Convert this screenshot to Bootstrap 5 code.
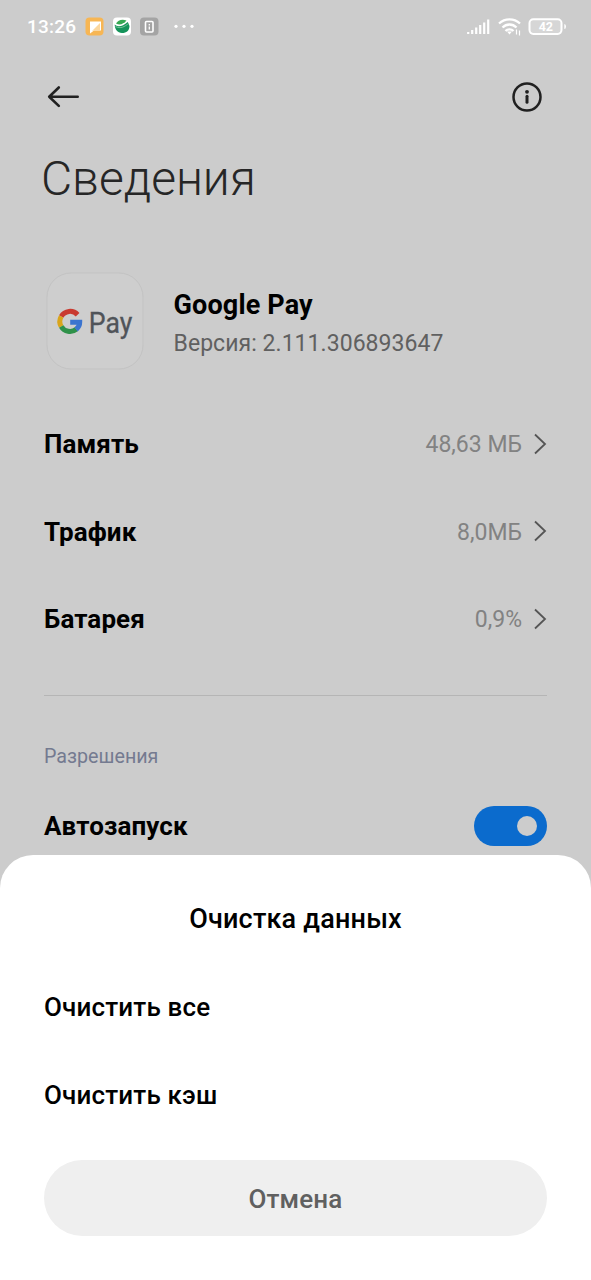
<!DOCTYPE html>
<html lang="ru">
<head>
<meta charset="utf-8">
<meta name="viewport" content="width=device-width, initial-scale=1">
<title>Сведения</title>
<link href="https://cdn.jsdelivr.net/npm/bootstrap@5.3.0/dist/css/bootstrap.min.css" rel="stylesheet">
<style>
  html, body { height: 100%; }
  body { font-family: Roboto, "Liberation Sans", sans-serif; background: #ccc; color: #000; overflow: hidden; }
  svg { display: block; flex: none; }
  .screen { width: 591px; height: 1280px; }
  .status-bar { height: 53px; padding: 0 24px 0 27px; color: #fff; }
  .clock { font-size: 19px; font-weight: 500; letter-spacing: .2px; width: 58px; padding-top: 2px; }
  .app-bar { height: 87px; padding: 0 48px 0 47px; }
  .page-title { height: 80px; padding-left: 41px; font-size: 48px; font-weight: 300; line-height: 78px; color: #262626; letter-spacing: -.05px; }
  .app-info { height: 180px; padding: 52px 44px 0 46px; }
  .app-text { padding-left: 29.5px; }
  .app-name { font-size: 27px; font-weight: 700; line-height: 36px; margin-top: 15px; letter-spacing: .15px; }
  .app-version { font-size: 23px; line-height: 30px; margin-top: 6px; color: #606060; letter-spacing: .05px; }
  .content { width: 503px; }
  .setting { height: 87.5px; font-size: 26px; font-weight: 700; letter-spacing: .1px; }
  .setting span { padding-top: 2px; }
  .setting .setting-value { font-size: 23px; font-weight: 400; color: #828282; letter-spacing: 0; margin-right: 11px; padding-top: 3px; }
  .divider { height: 1px; background: #b5b5b5; margin-top: 32px; }
  .section-label { font-size: 19.7px; line-height: 30px; margin-top: 46px; color: #747a90; }
  .autostart { height: 40px; margin-top: 34px; font-size: 26px; font-weight: 700; letter-spacing: .1px; }
  .autostart-label { padding-top: 2px; }
  .switch { width: 73px; height: 40px; padding-right: 10px; background: #0b6bcd; }
  .knob { width: 20px; height: 20px; background: #ccc; }
  .sheet { height: 425px; padding: 20px 44px 44px; border-radius: 33px 33px 0 0; background: #fff; font-weight: 500; }
  .sheet-title { height: 88px; font-size: 27px; letter-spacing: .2px; }
  .sheet-item { height: 88px; font-size: 26px; letter-spacing: .16px; }
  .cancel { height: 76px; margin-top: 21px; padding-top: 8px; font-size: 26px; font-weight: 500; letter-spacing: .15px; background: #efefef; color: #606060; }
</style>
</head>
<body>
<div class="screen d-flex flex-column">
  <header class="status-bar d-flex align-items-center flex-shrink-0">
    <span class="clock">13:26</span>
    <svg width="112" height="20" viewBox="0 0 112 20">
      <rect x="0.500" y="0.500" width="18" height="18" rx="4" fill="#f7b654"/>
      <path d="M5 4.500h11v9H9l-4 3z" fill="#fff"/><path d="M7 14l8-8v7.500H9z" fill="#fbd79e"/>
      <rect x="28" y="0.500" width="18" height="18" rx="4" fill="#fff"/>
      <path d="M29.700 7.500c3 3 8 2 13-2.500l1.800 4c0 4.500-3 7-7.500 7s-7.300-4-7.300-8.500z" fill="#15935a"/>
      <path d="M31 6.500c4 2 7.500.5 10.500-3-4.500-1.700-8.500-.5-10.500 3z" fill="#36a852"/><path d="M30.500 9.500c5 2.500 9 .5 13.500-3.500" fill="none" stroke="#8bd0a4" stroke-width=".8"/>
      <rect x="55" y="0.500" width="18.500" height="18" rx="4" fill="#a4a4a4"/>
      <rect x="60.500" y="4.500" width="7.500" height="10.500" rx="1" fill="none" stroke="#fff" stroke-width="1.600"/>
      <path d="M64.300 7v1.500M64.300 9.500v3" stroke="#fff" stroke-width="1.300"/>
      <g fill="#fff"><circle cx="91" cy="9.300" r="1.600"/><circle cx="99" cy="9.300" r="1.600"/><circle cx="107" cy="9.300" r="1.600"/></g>
    </svg>
    <svg class="ms-auto" width="101" height="20" viewBox="0 0 101 20">
      <path d="M2.200 17v-2M6.200 17v-4M10.200 17v-6.500M14.200 17v-9M18.200 17v-11.500M22.200 17v-14.500" stroke="#fff" stroke-width="2.200"/>
      <g fill="none" stroke="#fff" stroke-width="2.300"><path d="M33 6.500c6-5.500 15-5.500 21 0"/><path d="M36.500 10.500c4-4 10-4 14 0"/><path d="M39.500 14c2-2.200 6-2.200 8 0"/></g>
      <path d="M41 14.500h5l-2.500 3z" fill="#fff"/>
      <path d="M50.500 17.500v-5M53.500 13.500v5" stroke="#fff" stroke-width="1.200"/>
      <rect x="63.500" y="2.300" width="32" height="14.600" rx="3.800" fill="#d6d6d6" stroke="#fff" stroke-width="2"/>
      <path d="M98.300 7q1.700 0 1.700 2.500t-1.700 2.500z" fill="#fff"/>
      <text x="79.800" y="14.200" text-anchor="middle" font-size="12.500" font-weight="700" fill="#fff">42</text>
    </svg>
  </header>

  <nav class="app-bar d-flex align-items-center justify-content-between flex-shrink-0">
    <svg width="32" height="24" viewBox="0 0 32 24" fill="none" stroke="#202020" stroke-width="2.600" stroke-linecap="round" stroke-linejoin="round"><path d="M30.700 11.700H2.200M11.800 2.500L2.200 11.700l9.600 9.200"/></svg>
    <svg width="32" height="32" viewBox="0 0 32 32"><circle cx="16" cy="16" r="13.500" fill="none" stroke="#202020" stroke-width="2.500"/><circle cx="16" cy="10.800" r="1.900" fill="#202020"/><path d="M16 15.300v6" stroke="#202020" stroke-width="3" stroke-linecap="round"/></svg>
  </nav>

  <h1 class="page-title m-0 flex-shrink-0">Сведения</h1>

  <section class="app-info d-flex flex-shrink-0">
    <svg width="98" height="98" viewBox="0 0 98 98">
      <rect x="1" y="1" width="96" height="96" rx="24" fill="#cecece" stroke="#c3c3c3"/>
      <g fill="none" stroke-width="5">
        <path d="M31.600 42.700A10.200 10.200 0 0 0 15.200 44.500" stroke="#c93a30"/>
        <path d="M15.200 44.400A10.200 10.200 0 0 0 15.200 54.500" stroke="#d9a51c"/>
        <path d="M15.200 54.400A10.200 10.200 0 0 0 30.300 57.300" stroke="#2f9149"/>
        <path d="M30.100 57.500Q33.700 54.500 33.700 50.300H24.200" stroke="#3b74cf"/>
      </g>
      <text x="42.800" y="61" font-size="29" fill="#505459" stroke="#505459" stroke-width=".3" textLength="43.500" lengthAdjust="spacingAndGlyphs">Pay</text>
    </svg>
    <div class="app-text">
      <div class="app-name">Google Pay</div>
      <div class="app-version">Версия: 2.111.306893647</div>
    </div>
  </section>

  <main class="content mx-auto flex-shrink-0">
    <div class="setting d-flex align-items-center"><span>Память</span><span class="setting-value ms-auto">48,63 МБ</span><svg width="14" height="22" viewBox="0 0 14 22" fill="none" stroke="#555" stroke-width="1.800"><path d="M2 1.500l10 9.500L2 20.500"/></svg></div>
    <div class="setting d-flex align-items-center"><span>Трафик</span><span class="setting-value ms-auto">8,0МБ</span><svg width="14" height="22" viewBox="0 0 14 22" fill="none" stroke="#555" stroke-width="1.800"><path d="M2 1.500l10 9.500L2 20.500"/></svg></div>
    <div class="setting d-flex align-items-center"><span>Батарея</span><span class="setting-value ms-auto">0,9%</span><svg width="14" height="22" viewBox="0 0 14 22" fill="none" stroke="#555" stroke-width="1.800"><path d="M2 1.500l10 9.500L2 20.500"/></svg></div>
    <div class="divider"></div>
    <div class="section-label">Разрешения</div>
    <div class="autostart d-flex align-items-center justify-content-between">
      <span class="autostart-label">Автозапуск</span>
      <span class="switch rounded-pill d-flex align-items-center justify-content-end"><span class="knob rounded-circle"></span></span>
    </div>
  </main>

  <section class="sheet mt-auto flex-shrink-0">
    <div class="sheet-title d-flex align-items-center justify-content-center">Очистка данных</div>
    <div class="sheet-item d-flex align-items-center">Очистить все</div>
    <div class="sheet-item d-flex align-items-center">Очистить кэш</div>
    <button type="button" class="cancel btn border-0 rounded-pill w-100">Отмена</button>
  </section>
</div>
<script src="https://cdn.jsdelivr.net/npm/bootstrap@5.3.0/dist/js/bootstrap.bundle.min.js"></script>
</body>
</html>
